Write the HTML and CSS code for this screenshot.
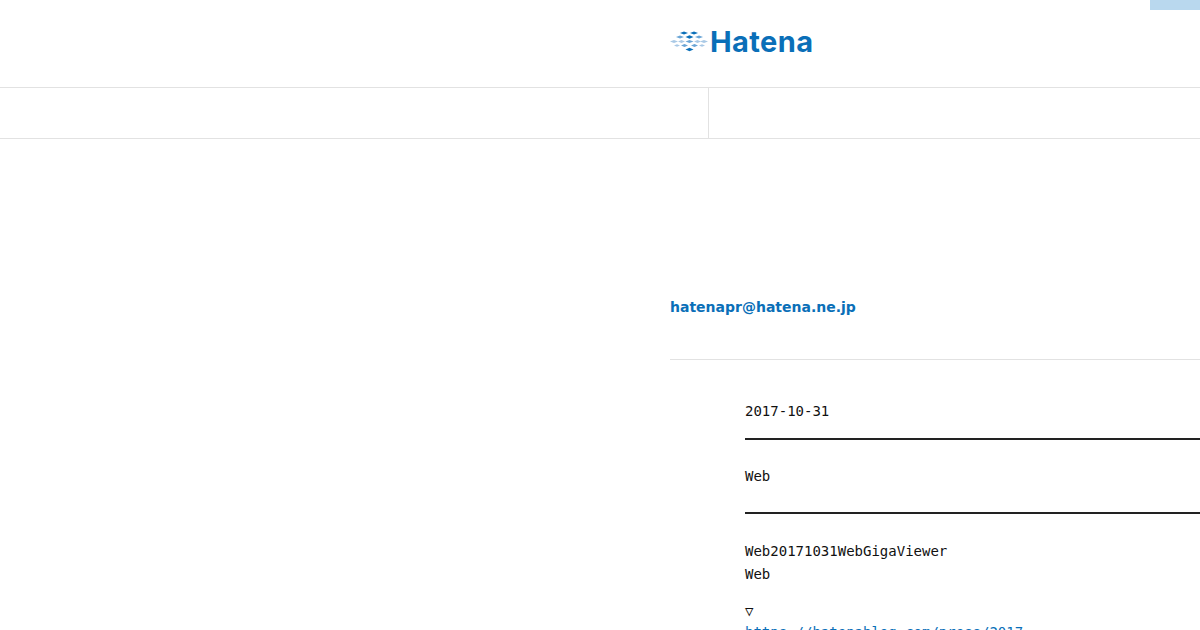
FILE: index.html
```html
<!DOCTYPE html>
<html lang="en">
<head>
  <meta charset="UTF-8">
  <meta name="viewport" content="width=device-width, initial-scale=1.0">
  <title>Hatena</title>
  <link rel="stylesheet" href="styles.css">
</head>
<body>
  <div class="top-tab"></div>

  <header class="site-header">
    <a class="logo" href="#">
      <svg class="logo-mark" width="38" height="22" viewBox="0 0 38 22">
        <g fill="#0a6fb8">
          <path d="M10 3l4-1.600 4 1.600-4 1.600z"/>
          <path d="M20 3l4-1.600 4 1.600-4 1.600z"/>
          <path d="M15.500 7l4-1.700 4 1.700-4 1.700z"/>
          <path d="M15.500 19.500l4-1.700 4 1.700-4 1.700z"/>
        </g>
        <g fill="#6aa5d6">
          <path d="M6 7l4-1.600 4 1.600-4 1.600z"/>
          <path d="M25 7l4-1.600 4 1.600-4 1.600z"/>
          <path d="M15.500 11.500l4-1.600 4 1.600-4 1.600z"/>
          <path d="M11 15.500l3.500-1.500 3.500 1.500-3.500 1.500z"/>
          <path d="M21 15.500l3.500-1.500 3.500 1.500-3.500 1.500z"/>
        </g>
        <g fill="#a9c9e6">
          <path d="M0 11.500l4-1.500 4 1.500-4 1.500z"/>
          <path d="M30 11.500l4-1.500 4 1.500-4 1.500z"/>
          <path d="M8 11.500l3.500-1.500 3.500 1.500-3.500 1.500z"/>
          <path d="M24 11.500l3.500-1.500 3.500 1.500-3.500 1.500z"/>
          <path d="M4 15.500l3-1.200 3 1.200-3 1.200z"/>
          <path d="M29 15.500l3-1.200 3 1.200-3 1.200z"/>
        </g>
      </svg>
      <span class="logo-text">Hatena</span>
    </a>
  </header>

  <nav class="site-nav">
    <div class="nav-left"></div>
    <div class="nav-right"></div>
  </nav>

  <main class="content">
    <a class="contact-mail" href="#">hatenapr@hatena.ne.jp</a>

    <article class="press">
      <p class="press-date">2017-10-31</p>
      <p class="press-title">Web</p>
      <div class="press-body">
        <p>Web20171031WebGigaViewer<br>Web</p>
        <p class="press-source">▽<br><a class="press-link" href="#">https://hatenablog.com/press/2017</a></p>
      </div>
    </article>
  </main>
</body>
</html>
```

FILE: styles.css
```css
html, body {
  margin: 0;
  height: 630px;
  overflow: hidden;
}
body {
  position: relative;
  background: #fff;
  color: #111;
  font-family: 'DejaVu Sans', sans-serif;
}
a {
  color: #0a6fb8;
  text-decoration: none;
}
p {
  margin: 0;
}
.top-tab {
  position: absolute;
  top: 0;
  right: 0;
  width: 50px;
  height: 10px;
  background: #b9d8ee;
}
.site-header {
  height: 87px;
  padding-left: 670px;
  border-bottom: 1px solid #e2e2e2;
}
.logo {
  display: flex;
  align-items: center;
  gap: 2px;
  height: 82px;
}
.logo-text {
  font-family: 'Inter', sans-serif;
  font-weight: 700;
  font-size: 29px;
  letter-spacing: 0.4px;
  color: #0a6fb8;
}
.site-nav {
  display: flex;
  height: 50px;
  border-bottom: 1px solid #e2e2e2;
}
.nav-left {
  width: 708px;
  border-right: 1px solid #e2e2e2;
}
.content {
  padding: 158px 0 0 670px;
}
.contact-mail {
  display: block;
  font-size: 14px;
  font-weight: 700;
  line-height: 20px;
}
.press {
  margin-top: 42px;
  padding: 40px 0 0 75px;
  border-top: 1px solid #e2e2e2;
  font-family: 'DejaVu Sans Mono', monospace;
  font-size: 14px;
  line-height: 23px;
}
.press-date {
  padding-bottom: 15px;
  border-bottom: 2px solid #222;
}
.press-title {
  padding: 25px 0 24px;
  border-bottom: 2px solid #222;
}
.press-body p {
  margin-top: 26px;
}
.press-body .press-source {
  margin-top: 15px;
  line-height: 21px;
}
.press-link {
  color: #0a6fb8;
  text-decoration: underline;
}
```
